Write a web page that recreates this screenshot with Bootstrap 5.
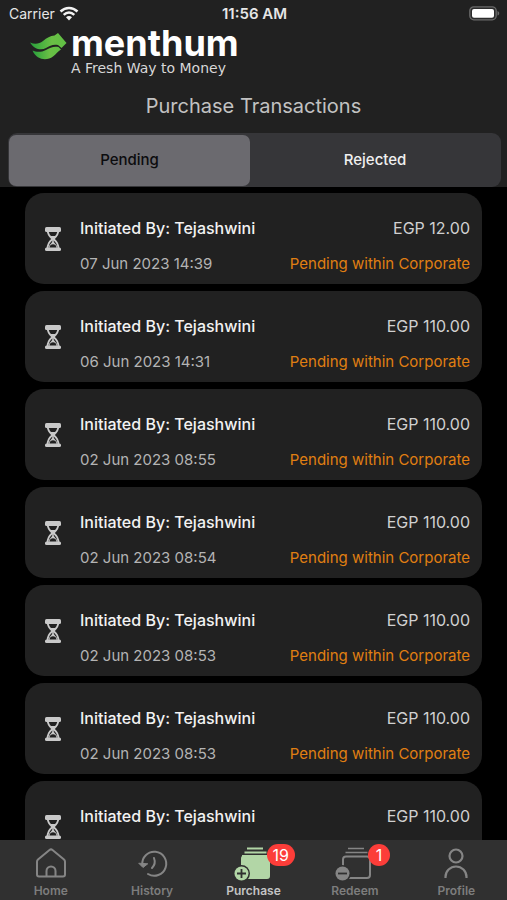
<!DOCTYPE html>
<html lang="en" data-bs-theme="dark">
<head>
<meta charset="utf-8">
<meta name="viewport" content="width=device-width, initial-scale=1">
<title>Purchase Transactions</title>
<link href="https://cdn.jsdelivr.net/npm/bootstrap@5.3.0/dist/css/bootstrap.min.css" rel="stylesheet">
<style>
body { background: #000; color: #dcdcdc; font-family: Inter, "Liberation Sans", sans-serif; }
.app-head { background: #212121; }
.status-bar { height: 26px; padding: 1px 7px 0 9px; font-size: 14px; line-height: 26px; color: #e6e6e6; }
.status-bar > * { flex: 1 1 0; }
.clock { font-size: 15px; }
.brand { padding-left: 30px; height: 54px; gap: 4px; }
.brand svg { margin-top: 6px; }
.brand-name { font-size: 36px; line-height: 34px; font-weight: 700; color: #fff; }
.brand-tag { font-family: "DejaVu Sans", sans-serif; font-size: 14px; line-height: 16px; color: #d8d8d8; }
.page-title { font-size: 20px; line-height: 53px; font-weight: 400; color: #c2c2c2; }
.segment { background: #363639; border-radius: 9px; margin: 0 6px 0 8px; padding: 2px 1px 1px; }
.segment .btn { flex: 51 1 0; height: 51px; font-size: 15px; font-weight: 500; color: #f0f0f0; border: 0; border-radius: 7px; }
.segment .btn.active { flex-grow: 49; background: #6b6a6f; color: #0c0c0e; }
.tx-list { padding: 6px 25px 0; gap: 7px; scrollbar-width: none; }
.tx-list::-webkit-scrollbar { display: none; }
.tx { background: #212121; border-radius: 19px; height: 91px; padding: 18px 12px 0 19px; flex: none; gap: 18px; }
.tx-row { line-height: 35px; }
.tx-name { font-size: 16px; font-weight: 500; color: #f2f2f2; }
.tx-sum { font-size: 16px; color: #d0d0d0; }
.tx-date { font-size: 15px; color: #b4b4b4; }
.tx-state { font-size: 15px; color: #e07f12; }
.tx svg { margin-top: 15px; flex: none; }
.tabs { background: #303030; height: 60px; }
.tabs a { color: #7d7d7d; font-size: 12px; line-height: 14px; font-weight: 600; padding-top: 5px; }
.tabs a.active { color: #c4c4c4; }
.tab-icon { width: 44px; height: 39px; }
.count { background: #fc3d39; color: #fff; font-size: 16px; line-height: 22px; font-weight: 400; min-width: 22px; padding: 0 6px; left: 35px; top: -1px; }
</style>
<script src="https://cdn.jsdelivr.net/npm/bootstrap@5.3.0/dist/js/bootstrap.bundle.min.js"></script>
</head>
<body class="vh-100 d-flex flex-column overflow-hidden">
<svg class="d-none" aria-hidden="true">
  <symbol id="hourglass" viewBox="0 0 18 26">
    <path d="M3.500 3c0 5 1.500 7 5 10c-3.500 3-5 5-5 10h11c0-5-1.500-7-5-10c3.500-3 5-5 5-10z" fill="none" stroke="#c9c9c9" stroke-width="2"/>
    <rect x="1" y="1" width="16" height="5" rx="1.500" fill="#c9c9c9"/>
    <rect x="1" y="21.500" width="16" height="3.500" rx="1.500" fill="#c9c9c9"/>
    <path d="M6 10h6l-2.200 3v3l3.200 4v2H5v-2l3.200-4v-3z" fill="#c9c9c9"/>
    <path d="M5.500 21.500c.3-2 1.700-3.200 3.500-3.200s3.200 1.200 3.500 3.200z" fill="#212121"/>
  </symbol>
</svg>
<header class="app-head">
  <div class="status-bar d-flex align-items-center">
    <div class="d-flex align-items-center gap-1"><span>Carrier</span>
      <svg width="20" height="15" viewBox="0 0 20 15" fill="none" stroke="#f2f2f2" stroke-width="2.500" aria-label="Wi-Fi"><path d="M1.500 5.500C6.500.8 13.500.8 18.500 5.500M4.700 8.800c3.200-3 7.400-3 10.600 0"/><path d="M10 14.500l-3-3.200c1.800-1.600 4.200-1.600 6 0z" fill="#f2f2f2" stroke="none"/></svg>
    </div>
    <div class="clock text-center fw-semibold">11:56 AM</div>
    <div class="d-flex justify-content-end">
      <svg width="31" height="15" viewBox="0 0 31 15" aria-label="Battery"><rect x=".8" y=".8" width="26.400" height="13" rx="4" fill="#2c2c2c" stroke="#6a6a6a" stroke-width="1.300"/><rect x="3" y="3" width="22" height="8.800" rx="2" fill="#fff"/><path d="M28.500 5c2.300.8 2.300 3.800 0 4.600z" fill="#6a6a6a"/></svg>
    </div>
  </div>
  <div class="brand d-flex">
    <svg width="37" height="28" viewBox="0 0 37 28" aria-hidden="true">
      <defs><linearGradient id="leaf" x1="0" x2="1"><stop stop-color="#28a03c"/><stop offset=".6" stop-color="#6abf45"/><stop offset="1" stop-color="#5fc044"/></linearGradient></defs>
      <path d="M0 10.500c5 2 9 1.500 13-1.500C17 5.500 20 4 24.500 3.500L28 1l8.500 10l-5 5l-3.500-3c-5-1-8 .5-12 3c-5 3-12 1-16-5.500z" fill="url(#leaf)"/>
      <path d="M2.500 18.500c4 2 9 1.800 13.500-.5c4-2.500 8-4 12.500-3l2.500 2.500c-3 2-5 4.500-8 7c-6 4.500-16 4-20.500-6z" fill="url(#leaf)"/>
    </svg>
    <div>
      <div class="brand-name">menthum</div>
      <div class="brand-tag">A Fresh Way to Money</div>
    </div>
  </div>
  <h1 class="page-title text-center mb-0">Purchase Transactions</h1>
  <div class="segment d-flex" role="group" aria-label="Status">
    <button type="button" class="btn active" aria-pressed="true">Pending</button>
    <button type="button" class="btn" aria-pressed="false">Rejected</button>
  </div>
</header>

<main class="tx-list flex-grow-1 overflow-auto d-flex flex-column">
  <article class="tx d-flex"><svg width="18" height="26"><use href="#hourglass"/></svg><div class="flex-grow-1"><div class="tx-row d-flex justify-content-between"><span class="tx-name">Initiated By: Tejashwini</span><span class="tx-sum">EGP 12.00</span></div><div class="tx-row d-flex justify-content-between"><span class="tx-date">07 Jun 2023 14:39</span><span class="tx-state">Pending within Corporate</span></div></div></article>
  <article class="tx d-flex"><svg width="18" height="26"><use href="#hourglass"/></svg><div class="flex-grow-1"><div class="tx-row d-flex justify-content-between"><span class="tx-name">Initiated By: Tejashwini</span><span class="tx-sum">EGP 110.00</span></div><div class="tx-row d-flex justify-content-between"><span class="tx-date">06 Jun 2023 14:31</span><span class="tx-state">Pending within Corporate</span></div></div></article>
  <article class="tx d-flex"><svg width="18" height="26"><use href="#hourglass"/></svg><div class="flex-grow-1"><div class="tx-row d-flex justify-content-between"><span class="tx-name">Initiated By: Tejashwini</span><span class="tx-sum">EGP 110.00</span></div><div class="tx-row d-flex justify-content-between"><span class="tx-date">02 Jun 2023 08:55</span><span class="tx-state">Pending within Corporate</span></div></div></article>
  <article class="tx d-flex"><svg width="18" height="26"><use href="#hourglass"/></svg><div class="flex-grow-1"><div class="tx-row d-flex justify-content-between"><span class="tx-name">Initiated By: Tejashwini</span><span class="tx-sum">EGP 110.00</span></div><div class="tx-row d-flex justify-content-between"><span class="tx-date">02 Jun 2023 08:54</span><span class="tx-state">Pending within Corporate</span></div></div></article>
  <article class="tx d-flex"><svg width="18" height="26"><use href="#hourglass"/></svg><div class="flex-grow-1"><div class="tx-row d-flex justify-content-between"><span class="tx-name">Initiated By: Tejashwini</span><span class="tx-sum">EGP 110.00</span></div><div class="tx-row d-flex justify-content-between"><span class="tx-date">02 Jun 2023 08:53</span><span class="tx-state">Pending within Corporate</span></div></div></article>
  <article class="tx d-flex"><svg width="18" height="26"><use href="#hourglass"/></svg><div class="flex-grow-1"><div class="tx-row d-flex justify-content-between"><span class="tx-name">Initiated By: Tejashwini</span><span class="tx-sum">EGP 110.00</span></div><div class="tx-row d-flex justify-content-between"><span class="tx-date">02 Jun 2023 08:53</span><span class="tx-state">Pending within Corporate</span></div></div></article>
  <article class="tx d-flex"><svg width="18" height="26"><use href="#hourglass"/></svg><div class="flex-grow-1"><div class="tx-row d-flex justify-content-between"><span class="tx-name">Initiated By: Tejashwini</span><span class="tx-sum">EGP 110.00</span></div></div></article>
</main>

<nav class="tabs d-flex flex-shrink-0" aria-label="Main">
  <a href="#home" class="w-100 d-flex flex-column align-items-center text-decoration-none">
    <svg class="tab-icon" viewBox="0 0 44 39" fill="none" stroke="#858585" stroke-width="2" stroke-linejoin="round"><path d="M9 14.500L20.500 5q1.500-1.200 3 0L35 14.500q1 .9 1 2.300V29.500q0 2-2 2H10q-2 0-2-2V16.800q0-1.400 1-2.300z"/><path d="M17.500 31.500v-5.500a4.500 4.500 0 0 1 9 0v5.500"/></svg>
    <span>Home</span></a>
  <a href="#history" class="w-100 d-flex flex-column align-items-center text-decoration-none">
    <svg class="tab-icon" viewBox="0 0 44 39" fill="none" stroke="#858585" stroke-width="2" stroke-linecap="round" stroke-linejoin="round"><path d="M12.300 20A12 12 0 1 1 18 29"/><path d="M9 18.500l4 4l4.500-3.500z" fill="#858585" stroke-width="1"/><path d="M24 13c1.500 4 1 7-2 10"/></svg>
    <span>History</span></a>
  <a href="#purchase" class="active w-100 d-flex flex-column align-items-center text-decoration-none" aria-current="page">
    <span class="position-relative d-block tab-icon">
      <svg class="tab-icon d-block" viewBox="0 0 44 39" fill="none"><path d="M15 3.500h16M12.500 7.500h22M10 11h27" stroke="#b2d6a6" stroke-width="1.800"/><rect x="9" y="10.500" width="29" height="23.500" rx="3" fill="#b2d6a6"/><circle cx="9.500" cy="28.500" r="8.500" fill="#303030"/><circle cx="9.500" cy="28.500" r="7" fill="#b2d6a6"/><path d="M9.500 24v9M5 28.500h9" stroke="#303030" stroke-width="1.800"/></svg>
      <span class="count badge rounded-pill position-absolute">19</span></span>
    <span>Purchase</span></a>
  <a href="#redeem" class="w-100 d-flex flex-column align-items-center text-decoration-none">
    <span class="position-relative d-block tab-icon">
      <svg class="tab-icon d-block" viewBox="0 0 44 39" fill="none"><path d="M15 3.500h16M12.500 7.500h22" stroke="#858585" stroke-width="1.700"/><rect x="10" y="11.500" width="27" height="21.500" rx="3" stroke="#858585" stroke-width="2"/><circle cx="9.500" cy="28.500" r="8.500" fill="#303030"/><circle cx="9.500" cy="28.500" r="7" fill="#858585"/><path d="M5 28.500h9" stroke="#303030" stroke-width="1.800"/></svg>
      <span class="count badge rounded-pill position-absolute">1</span></span>
    <span>Redeem</span></a>
  <a href="#profile" class="w-100 d-flex flex-column align-items-center text-decoration-none">
    <svg class="tab-icon" viewBox="0 0 44 39" fill="none" stroke="#858585" stroke-width="2.200"><circle cx="22" cy="11" r="6.500"/><path d="M11.500 33v-1a10.500 10.500 0 0 1 21 0v1"/></svg>
    <span>Profile</span></a>
</nav>
</body>
</html>
